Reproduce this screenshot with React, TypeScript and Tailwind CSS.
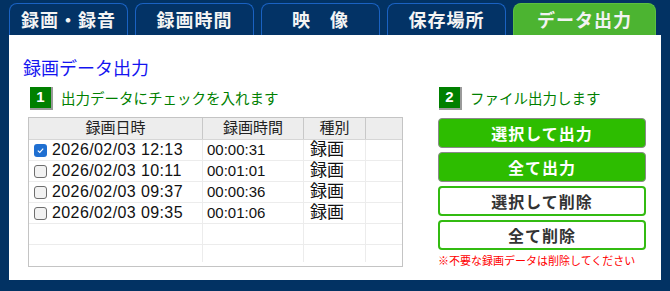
import React from "react";

const tabs = [
    {label: "録画・録音", width: "w-[119px]", active: false},
    {label: "録画時間", width: "w-[119px]", active: false},
    {label: "映　像", width: "w-[119px]", active: false},
    {label: "保存場所", width: "w-[119px]", active: false},
    {label: "データ出力", width: "w-[143px]", active: true},
];

const rows = [
    {date: "2026/02/03 12:13", time: "00:00:31", kind: "録画", checked: true},
    {date: "2026/02/03 10:11", time: "00:01:01", kind: "録画", checked: false},
    {date: "2026/02/03 09:37", time: "00:00:36", kind: "録画", checked: false},
    {date: "2026/02/03 09:35", time: "00:01:06", kind: "録画", checked: false},
    {date: "", time: "", kind: "", checked: null},
    {date: "", time: "", kind: "", checked: null},
];

const Step: React.FC<{ no: string; text: string }> = ({no, text}) => (
    <div className="flex items-center h-[23px] gap-[8px]">
        <div className="w-[23px] h-[23px] bg-[#008000] border-r-2 border-b-2 border-[#9a9a9a] flex items-center justify-center text-white font-bold text-[15px] font-['Liberation_Sans',sans-serif]">
            {no}
        </div>
        <span className="text-[14.5px] text-[#008000] leading-none">{text}</span>
    </div>
);

const CheckBox: React.FC<{ checked: boolean }> = ({checked}) =>
    checked ? (
        <span className="w-[13px] h-[13px] rounded-[3px] bg-[#1f6fd1] flex items-center justify-center">
            <svg width="9" height="9" viewBox="0 0 10 10">
                <path d="M2 5.2 L4.2 7.2 L8 3" stroke="white" strokeWidth="1.3" fill="none"/>
            </svg>
        </span>
    ) : (
        <span className="w-[13px] h-[13px] rounded-[3px] border border-[#6e6e6e] bg-[#f2f2f2]"/>
    );

export default function App() {
    return (
        <div className="w-[670px] h-[291px] bg-[#023263] pl-[9px] pt-[3px] font-['Noto_Sans_CJK_JP',sans-serif]">
            {/* tabs */}
            <div className="flex gap-[7px] h-[32px]">
                {tabs.map((t) => (
                    <div
                        key={t.label}
                        className={`${t.width} h-[32px] rounded-t-[8px] border border-b-0 flex items-center justify-center text-[18px] font-bold tracking-[1px] ${
                            t.active
                                ? "bg-[#4cb431] border-[#5cc040] text-[#f2f2f2]"
                                : "bg-[#033366] border-[#1a62c2] text-[#f4f4f4]"
                        }`}
                    >
                        {t.label}
                    </div>
                ))}
            </div>

            {/* panel */}
            <div className="w-[652px] h-[245px] bg-white pl-[14px] pt-[20px]">
                <div className="h-[24px] leading-[24px] text-[18px] text-[#1414f0]">録画データ出力</div>

                <div className="flex mt-[8px]">
                    {/* left */}
                    <div className="w-[375px] ml-[5px]">
                        <div className="ml-[2px]">
                            <Step no="1" text="出力データにチェックを入れます"/>
                        </div>
                        <div className="mt-[7px] w-[375px] h-[150px] border border-[#c4c4c4] font-['Liberation_Sans','Noto_Sans_CJK_JP',sans-serif]">
                            <div className="flex h-[22px] bg-[#ededed] border-b border-[#d6d6d6] text-[15px] text-[#222]">
                                <div className="w-[174px] border-r border-[#c8c8c8] flex items-center justify-center">録画日時</div>
                                <div className="w-[101px] border-r border-[#c8c8c8] flex items-center justify-center">録画時間</div>
                                <div className="w-[62px] border-r border-[#c8c8c8] flex items-center justify-center">種別</div>
                                <div className="flex-1"/>
                            </div>
                            {rows.map((r, i) => (
                                <div key={i} className={`flex text-[#111] ${i === rows.length - 1 ? "h-[17px]" : "h-[21px] border-b border-[#ececec]"}`}>
                                    <div className="w-[174px] border-r border-[#ececec] flex items-center pl-[5px] gap-[5px]">
                                        {r.checked !== null && <CheckBox checked={r.checked}/>}
                                        <span className="text-[16px] tracking-[0.4px]">{r.date}</span>
                                    </div>
                                    <div className="w-[101px] border-r border-[#ececec] flex items-center pl-[4px] text-[15px]">{r.time}</div>
                                    <div className="w-[62px] border-r border-[#ececec] flex items-center pl-[6px] text-[17px]">{r.kind}</div>
                                    <div className="flex-1"/>
                                </div>
                            ))}
                        </div>
                    </div>

                    {/* right */}
                    <div className="w-[208px] ml-[35px]">
                        <div className="ml-[1px]">
                            <Step no="2" text="ファイル出力します"/>
                        </div>
                        <div className="mt-[8px] flex flex-col gap-[4px]">
                            <button className="h-[30px] rounded-[4px] bg-[#2dbd00] border border-[#8a8a8a] text-white font-bold text-[16px] tracking-[1px]">選択して出力</button>
                            <button className="h-[30px] rounded-[4px] bg-[#2dbd00] border border-[#8a8a8a] text-white font-bold text-[16px] tracking-[1px]">全て出力</button>
                            <button className="h-[30px] rounded-[4px] bg-white border-2 border-[#33bb11] text-[#333] font-bold text-[16px] tracking-[1px]">選択して削除</button>
                            <button className="h-[30px] rounded-[4px] bg-white border-2 border-[#33bb11] text-[#333] font-bold text-[16px] tracking-[1px]">全て削除</button>
                        </div>
                        <div className="mt-[2px] text-[11px] text-[#ff0000] leading-[16px]">※不要な録画データは削除してください</div>
                    </div>
                </div>
            </div>
        </div>
    );
}
